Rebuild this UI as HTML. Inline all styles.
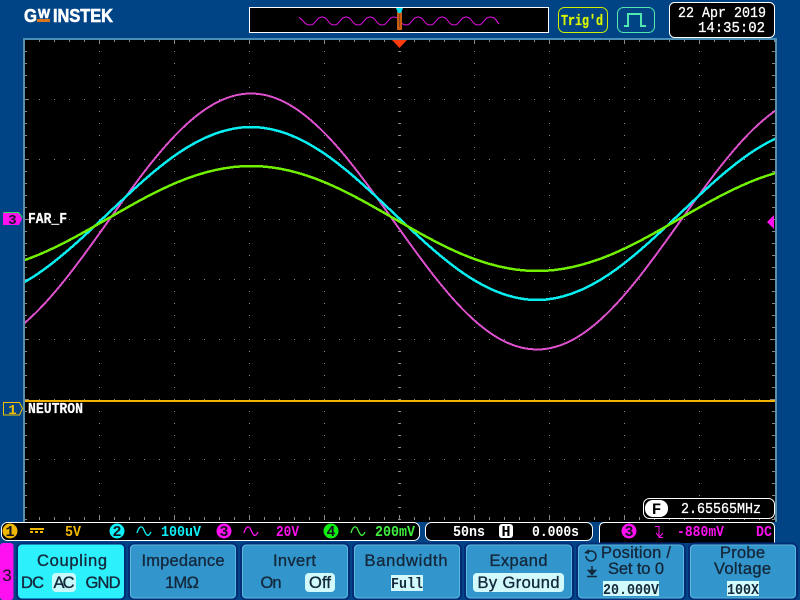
<!DOCTYPE html>
<html><head><meta charset="utf-8"><title>Scope</title>
<style>html,body{margin:0;padding:0;background:#014486;width:800px;height:600px;overflow:hidden}svg{display:block}
.m{font-family:"Liberation Mono",monospace;font-weight:700;font-size:15px}
.s{font-family:"Liberation Sans",sans-serif;font-size:16.5px;fill:#14283c;stroke:#14283c;stroke-width:.35px;text-anchor:middle}
.b{stroke:#022c78;stroke-width:2;fill:#3296cc}
.i{fill:none;stroke:#5cb8d8;stroke-width:1}
.h{fill:#d2fafc}
.l{font-family:"Liberation Sans",sans-serif;font-weight:700;fill:#fff;stroke:#fff;stroke-width:.6px}
</style></head><body>
<svg width="800" height="600" viewBox="0 0 800 600" xmlns="http://www.w3.org/2000/svg">
<defs>
<pattern id="pa" x="24" y="39" width="75" height="12" patternUnits="userSpaceOnUse"><rect width="1" height="1" fill="#8a8a8a"/></pattern>
<pattern id="pb" x="24" y="39" width="15" height="60" patternUnits="userSpaceOnUse"><rect width="1" height="1" fill="#8a8a8a"/></pattern>
<pattern id="tx" x="24" y="0" width="15" height="10" patternUnits="userSpaceOnUse"><rect width="1" height="10" fill="#8a8a8a"/></pattern>
<pattern id="ty" x="0" y="39" width="10" height="12" patternUnits="userSpaceOnUse"><rect width="10" height="1" fill="#8a8a8a"/></pattern>
<clipPath id="c"><rect x="25" y="40" width="750" height="480"/></clipPath>
<path id="w" fill="none" vector-effect="non-scaling-stroke" shape-rendering="crispEdges" d="M-3.1416 -1C-2.5731 -1 -2.0831 -.5123 -1.5708 0C-1.0585 .5123 -.5685 1 0 1C.5685 1 1.0585 .5123 1.5708 0C2.0831 -.5123 2.5731 -1 3.1416 -1C3.7101 -1 4.2001 -.5123 4.7124 0C5.2247 .5123 5.7147 1 6.2832 1"/>
</defs>
<rect width="800" height="600" fill="#014486"/>

<!-- logo -->
<text x="24" y="22" class="l" font-size="18" textLength="13" lengthAdjust="spacingAndGlyphs">G</text>
<text x="38" y="18" class="l" font-size="13" textLength="12" lengthAdjust="spacingAndGlyphs">W</text>
<rect x="37" y="19" width="13" height="3" fill="#d8741c"/>
<text x="53" y="22" class="l" font-size="18" textLength="60" lengthAdjust="spacingAndGlyphs">INSTEK</text>

<!-- overview -->
<rect x="249.500" y="7.500" width="299" height="25" fill="#000" stroke="#fff"/>
<path fill="none" stroke="#f010f0" stroke-width="1" d="M299 17.500C304 20 304 25 310 25S316 17 322 17S328 25 334 25S340 17 346 17S352 25 358 25S364 17 370 17S376 25 382 25S388 17 394 17S400 25 406 25S412 17 418 17S424 25 430 25S436 17 442 17S448 25 454 25S460 17 466 17S472 25 478 25S484 17 490 17S496 21 499 24"/>
<rect x="397" y="12" width="5" height="18" fill="#cc5c10"/><rect x="399" y="14" width="1" height="13" fill="#8a4a20"/>
<path d="M396 8h7l-2 5h-3z" fill="#10e0f0"/>

<!-- trig'd -->
<rect x="558.500" y="7.500" width="49" height="25" rx="6" fill="none" stroke="#d0f000"/>
<text x="561" y="25" class="m" fill="#d8f400" stroke="#d8f400" stroke-width=".3" textLength="42" lengthAdjust="spacingAndGlyphs">Trig'd</text>
<rect x="617.500" y="7.500" width="37" height="25" rx="6" fill="none" stroke="#50e8b0"/>
<path d="M624 26h4V14h13v12h5" fill="none" stroke="#50e8b0" stroke-width="2"/>

<!-- date -->
<rect x="669.500" y="2.500" width="105" height="35" rx="5" fill="#000" stroke="#fff"/>
<text x="678" y="17" class="m" fill="#fff" textLength="88" lengthAdjust="spacingAndGlyphs" style="font-weight:400" stroke="#fff" stroke-width=".3">22 Apr 2019</text>
<text x="698" y="32" class="m" fill="#fff" textLength="67" lengthAdjust="spacingAndGlyphs" style="font-weight:400" stroke="#fff" stroke-width=".3">14:35:02</text>

<!-- graticule -->
<rect x="24" y="39" width="752" height="483" fill="#000"/>
<rect x="23" y="38" width="754" height="2" fill="#4a8fb8"/>
<rect x="23" y="39" width="2" height="483" fill="#5c8ea8"/>
<rect x="775" y="39" width="2" height="483" fill="#5c8ea8"/>
<rect x="25" y="40" width="750" height="480" fill="url(#pa)"/>
<rect x="25" y="40" width="750" height="480" fill="url(#pb)"/>
<rect x="25" y="40" width="750" height="2" fill="url(#tx)"/>
<rect x="25" y="517" width="750" height="2" fill="url(#tx)"/>
<rect x="25" y="40" width="2" height="480" fill="url(#ty)"/>
<rect x="772" y="40" width="2" height="480" fill="url(#ty)"/>
<rect x="398" y="40" width="3" height="480" fill="url(#ty)"/>
<g fill="#8a8a8a"><rect x="99" y="40" width="1" height="4"/><rect x="174" y="40" width="1" height="4"/><rect x="249" y="40" width="1" height="4"/><rect x="324" y="40" width="1" height="4"/><rect x="474" y="40" width="1" height="4"/><rect x="549" y="40" width="1" height="4"/><rect x="624" y="40" width="1" height="4"/><rect x="699" y="40" width="1" height="4"/>
<rect x="99" y="515" width="1" height="4"/><rect x="174" y="515" width="1" height="4"/><rect x="249" y="515" width="1" height="4"/><rect x="324" y="515" width="1" height="4"/><rect x="399" y="515" width="1" height="4"/><rect x="474" y="515" width="1" height="4"/><rect x="549" y="515" width="1" height="4"/><rect x="624" y="515" width="1" height="4"/><rect x="699" y="515" width="1" height="4"/>
<rect x="25" y="99" width="4" height="1"/><rect x="25" y="159" width="4" height="1"/><rect x="25" y="219" width="4" height="1"/><rect x="25" y="279" width="4" height="1"/><rect x="25" y="339" width="4" height="1"/><rect x="25" y="399" width="4" height="1"/><rect x="25" y="459" width="4" height="1"/>
<rect x="770" y="99" width="4" height="1"/><rect x="770" y="159" width="4" height="1"/><rect x="770" y="219" width="4" height="1"/><rect x="770" y="279" width="4" height="1"/><rect x="770" y="339" width="4" height="1"/><rect x="770" y="399" width="4" height="1"/><rect x="770" y="459" width="4" height="1"/>
<rect x="397" y="219" width="5" height="1"/></g>

<!-- traces -->
<g clip-path="url(#c)">
<use href="#w" transform="translate(251 221.500) scale(91.04 -128)" stroke="#dc50cc" stroke-width="2"/>
<use href="#w" transform="translate(251 213.500) scale(91.04 -86.500)" stroke="#08eef0" stroke-width="2.500"/>
<use href="#w" transform="translate(251 218.500) scale(91.04 -52.500)" stroke="#70f000" stroke-width="2.500"/>
<rect x="25" y="400" width="750" height="2" fill="#f0b400"/>
</g>

<!-- markers -->
<path d="M392 40h15l-7.500 8z" fill="#ff3c10"/>
<path d="M767 222l7-7v14z" fill="#ff10f0"/>
<path d="M3 213h16l3 6-3 6H3z" fill="#ff10f0"/>
<path d="M3.500 212.500h15l4 5" fill="none" stroke="#30e060"/>
<text x="12.500" y="224" text-anchor="middle" class="m" style="font-size:14px" fill="#1a1030">3</text>
<text x="28" y="223" class="m" fill="#fff" textLength="39" lengthAdjust="spacingAndGlyphs" stroke="#fff" stroke-width=".2">FAR_F</text>
<path d="M3.500 402.500h16l3 6-3 6.500h-16z" fill="none" stroke="#f0c000"/>
<text x="12.500" y="414" text-anchor="middle" class="m" style="font-size:14px" fill="#f0c000">1</text>
<text x="28" y="413" class="m" fill="#fff" textLength="55" lengthAdjust="spacingAndGlyphs" stroke="#fff" stroke-width=".2">NEUTRON</text>

<!-- frequency -->
<rect x="643.500" y="498.500" width="131" height="20" rx="6" fill="#000" stroke="#fff"/>
<rect x="645" y="500" width="23" height="17" rx="8" fill="#fff"/>
<text x="656.500" y="514" text-anchor="middle" class="m" fill="#000" style="font-size:16px">F</text>
<text x="681" y="513" class="m" fill="#fff" textLength="80" lengthAdjust="spacingAndGlyphs" style="font-weight:400" stroke="#fff" stroke-width=".3">2.65565MHz</text>

<!-- status bar -->
<rect x="1.500" y="522.500" width="418" height="18" rx="6" fill="#000" stroke="#fff"/>
<circle cx="10" cy="531" r="7.500" fill="#f0b800"/>
<text x="10" y="536" text-anchor="middle" class="m" fill="#14141e">1</text>
<rect x="30" y="528" width="14" height="2" fill="#f0b800"/><path d="M30 532h14" stroke="#f0b800" stroke-width="2" stroke-dasharray="3 2"/>
<text x="65" y="536" class="m" fill="#f0b800" textLength="16" lengthAdjust="spacingAndGlyphs">5V</text>
<circle cx="117" cy="531" r="7.500" fill="#10f0f8"/>
<text x="117" y="536" text-anchor="middle" class="m" fill="#14141e">2</text>
<path d="M137 533C139 526 142 525 144 530S148 538 151 532" fill="none" stroke="#10f0f8" stroke-width="1.300"/>
<text x="161" y="536" class="m" fill="#10f0f8" textLength="40" lengthAdjust="spacingAndGlyphs">100uV</text>
<circle cx="224" cy="531" r="7.500" fill="#ff10f0"/>
<text x="224" y="536" text-anchor="middle" class="m" fill="#14141e">3</text>
<path d="M244 533C246 526 249 525 251 530S255 538 258 532" fill="none" stroke="#ff10f0" stroke-width="1.300"/>
<text x="276" y="536" class="m" fill="#ff10f0" textLength="23" lengthAdjust="spacingAndGlyphs">20V</text>
<circle cx="331" cy="531" r="7.500" fill="#10f010"/>
<text x="331" y="536" text-anchor="middle" class="m" fill="#14141e">4</text>
<path d="M351 533C353 526 356 525 358 530S362 538 365 532" fill="none" stroke="#40f040" stroke-width="1.300"/>
<text x="375" y="536" class="m" fill="#40f040" textLength="40" lengthAdjust="spacingAndGlyphs">200mV</text>

<rect x="425.500" y="522.500" width="167" height="18" rx="6" fill="#000" stroke="#fff"/>
<text x="453" y="536" class="m" fill="#fff" textLength="32" lengthAdjust="spacingAndGlyphs">50ns</text>
<rect x="499" y="524" width="14" height="14" rx="3" fill="#fff"/>
<text x="506" y="536" text-anchor="middle" class="m" fill="#000">H</text>
<text x="532" y="536" class="m" fill="#fff" textLength="47" lengthAdjust="spacingAndGlyphs">0.000s</text>

<path d="M599.500 543V528q0-5.500 5-5.500H770q4.500 0 4.500 5.500V543" fill="#000" stroke="#fff"/>
<circle cx="629" cy="531" r="7.500" fill="#ff10f0"/>
<text x="629" y="536" text-anchor="middle" class="m" fill="#14141e">3</text>
<path d="M655 526.500h4v11h4M656 533l3.500 4 3.500-4" fill="none" stroke="#ff10f0"/>
<text x="677" y="536" class="m" fill="#ff10f0" textLength="47" lengthAdjust="spacingAndGlyphs">-880mV</text>
<text x="756" y="536" class="m" fill="#ff10f0" textLength="16" lengthAdjust="spacingAndGlyphs">DC</text>

<!-- softkeys -->
<rect x="0" y="543" width="13.500" height="57" rx="3" fill="#ff10f0"/>
<text x="7" y="581" text-anchor="middle" style="font-family:'Liberation Sans',sans-serif;font-size:17px" fill="#14141e">3</text>
<rect x="17" y="543.500" width="108" height="56" rx="5" class="b" style="fill:#2cf0fc"/>
<rect x="129" y="543.500" width="108" height="56" rx="5" class="b"/>
<rect x="241" y="543.500" width="108" height="56" rx="5" class="b"/>
<rect x="353" y="543.500" width="108" height="56" rx="5" class="b"/>
<rect x="465" y="543.500" width="108" height="56" rx="5" class="b"/>
<rect x="577" y="543.500" width="108" height="56" rx="5" class="b"/>
<rect x="689" y="543.500" width="108" height="56" rx="5" class="b"/>
<rect x="130.500" y="545" width="105" height="53" rx="4" class="i"/>
<rect x="242.500" y="545" width="105" height="53" rx="4" class="i"/>
<rect x="354.500" y="545" width="105" height="53" rx="4" class="i"/>
<rect x="466.500" y="545" width="105" height="53" rx="4" class="i"/>
<rect x="578.500" y="545" width="105" height="53" rx="4" class="i"/>
<rect x="690.500" y="545" width="105" height="53" rx="4" class="i"/>

<text x="72" y="566" class="s" textLength="70">Coupling</text>
<rect x="52" y="573" width="24" height="19" rx="4" fill="#c8fafc"/>
<text x="32.500" y="588" class="s" textLength="23">DC</text>
<text x="64" y="588" class="s" textLength="21">AC</text>
<text x="103" y="588" class="s" textLength="35">GND</text>

<text x="183" y="566" class="s" textLength="83">Impedance</text>
<text x="182" y="588" class="s" textLength="34">1MΩ</text>

<text x="294.500" y="566" class="s" textLength="43">Invert</text>
<text x="271" y="588" class="s" textLength="21">On</text>
<rect x="305" y="573" width="30" height="19" rx="4" class="h"/>
<text x="320" y="588" class="s" textLength="22">Off</text>

<text x="406" y="566" class="s" textLength="83">Bandwidth</text>
<rect x="391" y="575" width="32" height="16" class="h"/>
<text x="391" y="588" class="m" fill="#14283c" textLength="32" lengthAdjust="spacingAndGlyphs">Full</text>

<text x="518.500" y="566" class="s" textLength="58">Expand</text>
<rect x="473" y="573" width="91" height="19" rx="4" class="h"/>
<text x="518.500" y="588" class="s" textLength="82">By Ground</text>

<path d="M586 556a5 5 0 1 0 2-4" fill="none" stroke="#14283c" stroke-width="1.500"/><path d="M584 553l5-4v5z" fill="#14283c"/>
<path d="M592 566v6M588.500 570.500h7l-3.500 4zM587 576.500h10" fill="#14283c" stroke="#14283c" stroke-width="1.500"/>
<text x="636" y="558" class="s" textLength="70">Position /</text>
<text x="636" y="574" class="s" textLength="56">Set to 0</text>
<rect x="603" y="581" width="56" height="15" class="h"/>
<text x="603" y="594" class="m" fill="#14283c" textLength="56" lengthAdjust="spacingAndGlyphs">20.000V</text>

<text x="742.500" y="558" class="s" textLength="45">Probe</text>
<text x="742.500" y="574" class="s" textLength="57">Voltage</text>
<rect x="727" y="581" width="32" height="15" class="h"/>
<text x="727" y="594" class="m" fill="#14283c" textLength="32" lengthAdjust="spacingAndGlyphs">100X</text>
</svg>
</body></html>
